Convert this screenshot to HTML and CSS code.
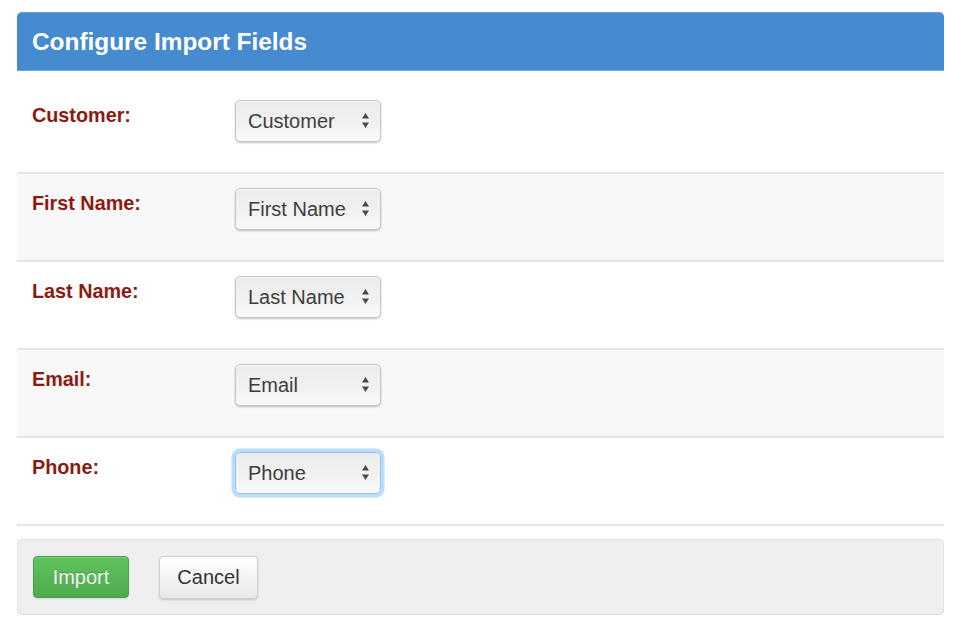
FILE: index.html
```html
<!DOCTYPE html>
<html>
<head>
<meta charset="utf-8">
<title>Configure Import Fields</title>
<link rel="stylesheet" href="styles.css">
</head>
<body>
<div class="panel">
  <div class="panel-header"><h3 class="title">Configure Import Fields</h3></div>
  <form class="fields">
    <div class="row first">
      <label class="label">Customer:</label>
      <div class="select-wrap">
        <select class="select"><option>Customer</option></select>
        <svg class="arrows" width="7" height="15" viewBox="0 0 7 15"><path d="M3.5 0 L7 5.5 L0 5.5 Z M3.5 15 L7 9.5 L0 9.5 Z" fill="#4a4a4a"/></svg>
      </div>
    </div>
    <div class="row alt">
      <label class="label">First Name:</label>
      <div class="select-wrap">
        <select class="select"><option>First Name</option></select>
        <svg class="arrows" width="7" height="15" viewBox="0 0 7 15"><path d="M3.5 0 L7 5.5 L0 5.5 Z M3.5 15 L7 9.5 L0 9.5 Z" fill="#4a4a4a"/></svg>
      </div>
    </div>
    <div class="row">
      <label class="label">Last Name:</label>
      <div class="select-wrap">
        <select class="select"><option>Last Name</option></select>
        <svg class="arrows" width="7" height="15" viewBox="0 0 7 15"><path d="M3.5 0 L7 5.5 L0 5.5 Z M3.5 15 L7 9.5 L0 9.5 Z" fill="#4a4a4a"/></svg>
      </div>
    </div>
    <div class="row alt">
      <label class="label">Email:</label>
      <div class="select-wrap">
        <select class="select"><option>Email</option></select>
        <svg class="arrows" width="7" height="15" viewBox="0 0 7 15"><path d="M3.5 0 L7 5.5 L0 5.5 Z M3.5 15 L7 9.5 L0 9.5 Z" fill="#4a4a4a"/></svg>
      </div>
    </div>
    <div class="row">
      <label class="label">Phone:</label>
      <div class="select-wrap">
        <select class="select focused"><option>Phone</option></select>
        <svg class="arrows" width="7" height="15" viewBox="0 0 7 15"><path d="M3.5 0 L7 5.5 L0 5.5 Z M3.5 15 L7 9.5 L0 9.5 Z" fill="#4a4a4a"/></svg>
      </div>
    </div>
  </form>
  <div class="actions">
    <button class="btn btn-success" type="button">Import</button>
    <button class="btn btn-default" type="button">Cancel</button>
  </div>
</div>
</body>
</html>
```
FILE: styles.css
```css
html, body {
  margin: 0;
  padding: 0;
  background: #fff;
}
body {
  padding: 12px 17px;
  font-family: "Liberation Sans", Arial, Helvetica, sans-serif;
}
.panel {
  width: 927px;
}
.panel-header {
  height: 57px;
  display: flex;
  align-items: center;
  background: #468bcf;
  border-top: 1px solid #63a2dd;
  border-bottom: 1px solid #6aa8e2;
  border-radius: 5px 5px 0 0;
  padding-left: 15px;
}
.title {
  margin: 0;
  color: #fff;
  font-size: 24.4px;
  line-height: 24px;
  font-weight: bold;
}
.fields {
  margin: 0;
}
.row {
  display: flex;
  align-items: flex-start;
  padding: 14px 0 30px 15px;
  border-bottom: 2px solid #e6e6e6;
  background: #fff;
}
.row.first {
  padding-top: 29px;
}
.row.alt {
  background: #f8f8f8;
}
.label {
  width: 203px;
  padding-top: 5px;
  color: #8b1b12;
  font-size: 19.8px;
  line-height: 20px;
  font-weight: bold;
}
.select-wrap {
  position: relative;
  width: 146px;
  height: 42px;
}
.select {
  -webkit-appearance: none;
  appearance: none;
  box-sizing: border-box;
  width: 146px;
  height: 42px;
  margin: 0;
  padding: 0 0 0 12px;
  font-family: "Liberation Sans", Arial, Helvetica, sans-serif;
  font-size: 20px;
  color: #3d3d3d;
  border: 1px solid #c6c6c6;
  border-radius: 5px;
  background: linear-gradient(#ececec, #f1f1f1 55%, #fafafa);
  box-shadow: 0 1px 2px rgba(0, 0, 0, 0.25), inset 0 1px 0 rgba(255, 255, 255, 0.5);
  outline: none;
}
.select.focused {
  border-color: #8fc0ec;
  box-shadow: 0 0 0 3.5px #bddcf7, 0 1px 2px rgba(0, 0, 0, 0.2);
}
.arrows {
  position: absolute;
  right: 12px;
  top: 13px;
  pointer-events: none;
}
.actions {
  margin-top: 13px;
  display: flex;
  align-items: flex-start;
  gap: 30px;
  padding: 16px 15px 15px;
  background: #efefef;
  border: 1px solid #e2e2e2;
  border-radius: 4px;
}
.btn {
  box-sizing: border-box;
  height: 42px;
  margin: 0;
  font-family: "Liberation Sans", Arial, Helvetica, sans-serif;
  font-size: 20px;
  border-radius: 4px;
  cursor: pointer;
}
.btn-success {
  width: 96px;
  color: #f4f4f4;
  background: linear-gradient(#5fc35f, #4eaa4e);
  border: 1px solid #47a047;
  text-shadow: 0 -1px 0 rgba(0, 0, 0, 0.2);
  box-shadow: inset 0 1px 0 rgba(255, 255, 255, 0.2), 0 1px 2px rgba(0, 0, 0, 0.1);
}
.btn-default {
  width: 99px;
  height: 43px;
  color: #333;
  background: linear-gradient(#ffffff, #e8e8e8);
  border: 1px solid #d0d0d0;
  box-shadow: 0 1px 2px rgba(0, 0, 0, 0.18);
}
```
